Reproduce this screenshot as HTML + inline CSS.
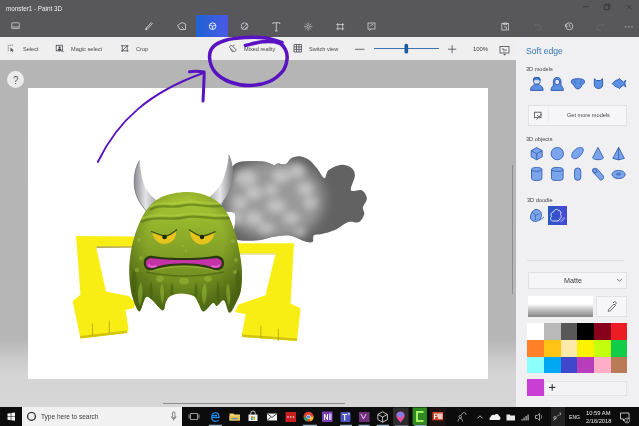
<!DOCTYPE html>
<html><head><meta charset="utf-8">
<style>
*{margin:0;padding:0;box-sizing:border-box}
html,body{width:639px;height:426px;overflow:hidden;background:#b5b6b5;font-family:"Liberation Sans",sans-serif}
.a{position:absolute}
#title{left:0;top:0;width:639px;height:37px;background:#58585c}
#tb{left:0;top:37px;width:516px;height:23px;background:#efeff0}
#area{left:0;top:60px;width:516px;height:347px;background:linear-gradient(#b4b5b4 0,#b5b6b5 279px,#c8c8c8 297px,#d4d4d4 314px,#d7d7d7 347px)}
#canvas{left:28px;top:88px;width:460px;height:291px;background:#fff}
#panel{left:516px;top:37px;width:123px;height:370px;background:#f0f0f2}
#task{left:0;top:407px;width:639px;height:19px;background:#0c0c0c}
.t{position:absolute;white-space:nowrap;line-height:1;-webkit-font-smoothing:antialiased;will-change:transform}
</style></head><body>
<div class="a" id="title">
<div class="t" style="left:6px;top:6.3px;font-size:6.3px;color:#f2f2f2">monster1 - Paint 3D</div>
<div class="a" style="left:196px;top:15px;width:32px;height:22px;background:linear-gradient(90deg,#1f63d3,#3a5ee0 60%,#4a58e6)"></div>
<svg class="a" style="left:0;top:0" width="639" height="37" viewBox="0 0 639 37" fill="none" stroke="#cfcfd2" stroke-width="0.8">
<rect x="11.8" y="22.8" width="7.5" height="5.8" rx="0.5"/><path d="M11.8 27h7.5"/>
<path d="M145.8 29.8l1.5-.5 5-5.8-1-1-5 5.6zM145.8 29.8l.8-2" stroke-width="0.9"/>
<path d="M177.5 25.5l4.5-3 3.5 1.5v5.5h-5.5zM181.5 26.5l2 2" stroke-width="0.9"/>
<g stroke="#f4f6ff" stroke-width="0.9"><circle cx="212.6" cy="26.2" r="3.3"/><path d="M210.2 25l2.4 1.3 2.4-1.3M212.6 26.3v3"/></g>
<circle cx="244.6" cy="26.2" r="3.4"/><path d="M242 28.8l5-5M244.5 29.5l2.5-2.5"/>
<path d="M272.8 22.8h7M276.3 22.8v8.2M275 31h2.6M272.8 22.8v1.3M279.8 22.8v1.3" stroke-width="0.9"/>
<g stroke-width="0.7"><circle cx="308.2" cy="26.6" r="1.4"/><path d="M308.2 22.5v2M308.2 28.7v2M304.1 26.6h2M310.3 26.6h2M305.3 23.7l1.4 1.4M309.7 28.1l1.4 1.4M305.3 29.5l1.4-1.4M309.7 25.1l1.4-1.4"/></g>
<path d="M337.8 23v7.2M342.6 23v7.2M336.3 24.5h7.8M336.3 28.8h7.8" stroke-width="0.8"/>
<rect x="368" y="23" width="7" height="6" /><path d="M370 26.5l1.8-1.8h1.5M369 31l1.8-1.8" stroke-width="0.8"/>
<rect x="501.8" y="23.5" width="6.8" height="6.5"/><path d="M503.5 23h3.4v1.6h-3.4zM504 27h2.4v2.8"/>
<path d="M534.5 25h4.3a2.6 2.6 0 010 5.2h-1.8M536.3 23.2l-1.8 1.8 1.8 1.8" stroke="#6a6a6e"/>
<circle cx="569.3" cy="26.3" r="3.5"/><path d="M569.3 24.2v2.2l1.5 1M565.5 24v2.3h2.2"/>
<path d="M603.5 25h-4.3a2.6 2.6 0 000 5.2h1.8M601.7 23.2l1.8 1.8-1.8 1.8" stroke="#6a6a6e"/>
<g fill="#d4d4d6" stroke="none"><circle cx="625.8" cy="26.8" r="0.65"/><circle cx="628.9" cy="26.8" r="0.65"/><circle cx="632" cy="26.8" r="0.65"/></g>
<g stroke="#3c3c40" stroke-width="1"><path d="M583 6.8h5.5"/><rect x="604.3" y="5.2" width="4.4" height="4.4"/><path d="M605.5 5.2v-1.2h4.4v4.4h-1.2"/><path d="M627 4.8l4.4 4.4M631.4 4.8l-4.4 4.4"/></g>
</svg>
</div>
<div class="a" id="tb">
<div class="t" style="left:22.5px;top:10.2px;font-size:5.6px;color:#48484c">Select</div>
<div class="t" style="left:70.7px;top:10.2px;font-size:5.6px;color:#48484c">Magic select</div>
<div class="t" style="left:135.7px;top:10.2px;font-size:5.6px;color:#48484c">Crop</div>
<div class="t" style="left:243.8px;top:10.2px;font-size:5.6px;color:#48484c">Mixed reality</div>
<div class="t" style="left:309.4px;top:10.2px;font-size:5.6px;color:#48484c">Switch view</div>
<div class="t" style="left:472.8px;top:10px;font-size:5.9px;color:#3a3a3c">100%</div>
</div>
<svg class="a" style="left:0;top:37px" width="516" height="22" viewBox="0 37 516 22" fill="none" stroke="#4a4a50" stroke-width="0.8">
<!-- select -->
<path d="M8.3 45.2v1.2M8.3 47.4v1.2M8.3 49.6v1.2M9.5 45.2h1.2M11.7 45.2h1.2" stroke-width="0.8"/><path d="M10.5 47.5v4.2l1.1-1 .8 1.6.7-.3-.8-1.6h1.5z" fill="#4a4a50" stroke="none"/>
<!-- magic select -->
<rect x="56.2" y="45.3" width="6.2" height="5.6" stroke-width="0.8"/><path d="M57.8 50.5c0-1.5.8-2.3 1.8-2.3s1.8.8 1.8 2.3z" fill="#3a3a40" stroke="none"/><circle cx="59.6" cy="47.2" r="1" fill="#3a3a40" stroke="none"/><path d="M62.5 50.8l1.2 1.2" stroke-width="0.8"/>
<!-- crop -->
<path d="M121 45.8h7.5M121 50.8h7.5M122.3 45v6.8M127.2 45v6.8M122.3 50.8l4.9-5" stroke-width="0.8"/>
<!-- mixed reality -->
<path d="M229.3 47l2-2 5 5-2 2zM230.3 49.5l2.5 2.3M233 46l1.5-1" stroke-width="0.8"/>
<!-- switch view grid -->
<path d="M294 44.5h7.5v7.5h-7.5zM294 46.9h7.5M294 49.4h7.5M296.5 44.5v7.5M299 44.5v7.5"/>
<!-- minus -->
<path d="M355 49.3h9.5" stroke-width="0.8"/>
<!-- slider -->
<path d="M374 48.5h65" stroke="#3d73b0" stroke-width="1"/>
<rect x="404.5" y="43.8" width="3.6" height="9.8" rx="1.6" fill="#1e5a9e" stroke="none"/>
<!-- plus -->
<path d="M448 49.2h8.2M452.1 45.2v8"/>
<!-- view icon -->
<rect x="500" y="46.5" width="9" height="6.5" /><path d="M502 49h2v2.5M505 50h2" /><path d="M503.8 54.3h1.6l-.8.9z" fill="#4a4a50"/>
</svg>
<div class="a" id="area"></div>
<div class="a" style="left:511.5px;top:165px;width:1.3px;height:129px;background:#8e8e8e"></div>
<div class="a" style="left:163px;top:402.5px;width:182px;height:1.3px;background:#8e8e8e"></div>
<div class="a" style="left:7px;top:71.2px;width:17px;height:17px;border-radius:50%;background:#ebebeb"></div>
<div class="t" style="left:12.8px;top:76.2px;font-size:10px;color:#505050;transform:scaleX(0.9)">?</div>
<div class="a" id="canvas"></div>
<svg class="a" style="left:0;top:0" width="639" height="426" viewBox="0 0 639 426">
<defs>
<radialGradient id="gBody" cx="0.42" cy="0.35" r="0.7">
<stop offset="0" stop-color="#9ab830"/><stop offset="0.55" stop-color="#7c9a22"/><stop offset="1" stop-color="#56701a"/>
</radialGradient>
<linearGradient id="gBodyV" x1="0" y1="0" x2="0" y2="1">
<stop offset="0" stop-color="#acca34"/><stop offset="0.3" stop-color="#92b22c"/><stop offset="0.6" stop-color="#7a9824"/><stop offset="1" stop-color="#60801a"/>
</linearGradient>
<radialGradient id="gBodyEdge" cx="0.5" cy="0.42" r="0.62">
<stop offset="0.55" stop-color="#3e5410" stop-opacity="0"/><stop offset="1" stop-color="#3e5410" stop-opacity="0.7"/>
</radialGradient>
<linearGradient id="gHornL" x1="0" y1="0" x2="1" y2="0">
<stop offset="0" stop-color="#8a8a90"/><stop offset="0.45" stop-color="#e4e4e8"/><stop offset="1" stop-color="#9a9aa0"/>
</linearGradient>
<linearGradient id="gHornR" x1="0" y1="0" x2="1" y2="0">
<stop offset="0" stop-color="#a0a0a6"/><stop offset="0.5" stop-color="#e8e8ec"/><stop offset="1" stop-color="#808086"/>
</linearGradient>
<radialGradient id="gCloud" cx="0.35" cy="0.45" r="0.65">
<stop offset="0" stop-color="#a8a8a8"/><stop offset="0.6" stop-color="#8c8c8c"/><stop offset="1" stop-color="#6a6a6a"/>
</radialGradient>
<filter id="blur1" x="-20%" y="-20%" width="140%" height="140%"><feGaussianBlur stdDeviation="0.5"/></filter>
<filter id="blur6" x="-50%" y="-50%" width="200%" height="200%"><feGaussianBlur stdDeviation="6"/></filter>
<filter id="blur3" x="-50%" y="-50%" width="200%" height="200%"><feGaussianBlur stdDeviation="3.5"/></filter>
</defs>
<!-- cloud -->
<clipPath id="cClip"><path d="M232.6 166.3 C234.6 164.1 236.8 162.3 241.9 161.5 C247.0 160.7 257.9 160.9 263.2 161.5 C268.5 162.1 271.4 164.6 273.8 164.9 C276.3 165.3 275.8 163.8 277.8 163.6 C279.8 163.5 283.6 165.0 285.8 164.1 C288.0 163.3 288.9 159.6 291.1 158.3 C293.3 157.0 296.2 155.9 299.1 156.2 C302.0 156.4 305.5 157.7 308.4 159.6 C311.3 161.5 313.7 164.5 316.4 167.6 C319.0 170.7 322.4 177.8 324.4 178.2 C326.4 178.7 325.7 172.5 328.4 170.3 C331.0 168.0 336.6 165.4 340.3 164.9 C344.1 164.5 348.5 165.8 351.0 167.6 C353.4 169.4 354.9 171.8 354.9 175.6 C354.9 179.4 349.8 187.8 351.0 190.2 C352.1 192.7 358.9 188.9 361.6 190.2 C364.3 191.5 366.7 195.3 366.9 198.2 C367.1 201.1 363.4 204.8 362.9 207.5 C362.5 210.2 364.9 211.7 364.3 214.1 C363.6 216.6 361.6 220.8 358.9 222.1 C356.3 223.5 352.3 220.8 348.3 222.1 C344.3 223.5 339.4 228.1 335.0 230.1 C330.6 232.1 325.2 233.2 321.7 234.1 C318.2 235.0 315.3 234.1 313.7 235.4 C312.2 236.8 314.2 241.2 312.4 242.1 C310.6 243.0 306.9 241.9 303.1 240.7 C299.3 239.6 294.7 236.1 289.8 235.4 C284.9 234.8 278.3 236.1 273.8 236.8 C269.4 237.4 267.2 238.8 263.2 239.4 C259.2 240.1 254.3 240.7 249.9 240.7 C245.5 240.7 239.3 240.7 236.6 239.4 C233.9 238.1 234.2 237.0 233.9 232.8 C233.7 228.6 236.6 217.7 235.3 214.1 C233.9 210.6 228.4 212.6 226.0 211.5 C223.5 210.4 220.4 210.4 220.6 207.5 C220.9 204.6 225.5 198.0 227.3 194.2 C229.1 190.4 230.8 188.2 231.3 184.9 C231.7 181.6 229.7 177.4 229.9 174.3 C230.2 171.2 230.6 168.4 232.6 166.3Z"/></clipPath>
<path d="M232.6 166.3 C234.6 164.1 236.8 162.3 241.9 161.5 C247.0 160.7 257.9 160.9 263.2 161.5 C268.5 162.1 271.4 164.6 273.8 164.9 C276.3 165.3 275.8 163.8 277.8 163.6 C279.8 163.5 283.6 165.0 285.8 164.1 C288.0 163.3 288.9 159.6 291.1 158.3 C293.3 157.0 296.2 155.9 299.1 156.2 C302.0 156.4 305.5 157.7 308.4 159.6 C311.3 161.5 313.7 164.5 316.4 167.6 C319.0 170.7 322.4 177.8 324.4 178.2 C326.4 178.7 325.7 172.5 328.4 170.3 C331.0 168.0 336.6 165.4 340.3 164.9 C344.1 164.5 348.5 165.8 351.0 167.6 C353.4 169.4 354.9 171.8 354.9 175.6 C354.9 179.4 349.8 187.8 351.0 190.2 C352.1 192.7 358.9 188.9 361.6 190.2 C364.3 191.5 366.7 195.3 366.9 198.2 C367.1 201.1 363.4 204.8 362.9 207.5 C362.5 210.2 364.9 211.7 364.3 214.1 C363.6 216.6 361.6 220.8 358.9 222.1 C356.3 223.5 352.3 220.8 348.3 222.1 C344.3 223.5 339.4 228.1 335.0 230.1 C330.6 232.1 325.2 233.2 321.7 234.1 C318.2 235.0 315.3 234.1 313.7 235.4 C312.2 236.8 314.2 241.2 312.4 242.1 C310.6 243.0 306.9 241.9 303.1 240.7 C299.3 239.6 294.7 236.1 289.8 235.4 C284.9 234.8 278.3 236.1 273.8 236.8 C269.4 237.4 267.2 238.8 263.2 239.4 C259.2 240.1 254.3 240.7 249.9 240.7 C245.5 240.7 239.3 240.7 236.6 239.4 C233.9 238.1 234.2 237.0 233.9 232.8 C233.7 228.6 236.6 217.7 235.3 214.1 C233.9 210.6 228.4 212.6 226.0 211.5 C223.5 210.4 220.4 210.4 220.6 207.5 C220.9 204.6 225.5 198.0 227.3 194.2 C229.1 190.4 230.8 188.2 231.3 184.9 C231.7 181.6 229.7 177.4 229.9 174.3 C230.2 171.2 230.6 168.4 232.6 166.3Z" fill="#626262"/>
<g clip-path="url(#cClip)">
<ellipse cx="274" cy="200" rx="50" ry="40" fill="#9a9a9a" filter="url(#blur6)"/>
<g fill="#c4c4c4" filter="url(#blur3)" opacity="0.95"><ellipse cx="246" cy="178" rx="11" ry="8"/><ellipse cx="254" cy="193" rx="9" ry="7"/><ellipse cx="240" cy="203" rx="7" ry="7"/><ellipse cx="281" cy="176" rx="9" ry="7"/><ellipse cx="297" cy="171" rx="8" ry="7"/><ellipse cx="305" cy="189" rx="8" ry="7"/><ellipse cx="276" cy="206" rx="10" ry="7"/><ellipse cx="254" cy="218" rx="9" ry="7"/><ellipse cx="291" cy="218" rx="8" ry="6"/><ellipse cx="310" cy="203" rx="7" ry="6"/><ellipse cx="271" cy="190" rx="7" ry="6"/><ellipse cx="266" cy="228" rx="8" ry="5"/><ellipse cx="236" cy="218" rx="6" ry="6"/><ellipse cx="300" cy="232" rx="6" ry="4"/></g>
</g>
<!-- horns -->
<path d="M139.5 160.5 C135 168 133.5 178 134.5 187 C135.5 196 140 204 146.5 211 L159.5 202.5 C153 198 148 193 145 187 C142 180 140.5 170 139.5 160.5Z" fill="url(#gHornL)"/>
<path d="M139.5 160.5 C135 168 133.5 178 134.5 187 C135.5 196 140 204 146.5 211" fill="none" stroke="#7a7a82" stroke-width="0.9"/>
<path d="M228.7 155 C232.5 163 233.5 173 232 182 C230 192 225 200 218.5 206.5 L207.5 198.5 C214 194 219 188 222.5 181 C226 173 228 164 228.7 155Z" fill="url(#gHornR)"/>
<path d="M228.7 155 C232.5 163 233.5 173 232 182 C230 192 225 200 218.5 206.5" fill="none" stroke="#86868c" stroke-width="0.9"/>
<!-- left arm -->
<path d="M76 236 L134 236.5 L134 246.5 L96 246.5 L106 291.5 L129 296 L135 303 L134 308 L125.5 310 L128.5 329 L127 333 L80.5 338.5 L72.6 301 L80.5 294.5Z" fill="#f9ee14"/>
<path d="M127 333 L80.5 338.5 L80 336 L127 330.5Z" fill="#d2c40c"/>
<path d="M92.5 323.5v12.5M109.3 320.5v12.5" stroke="#b4a808" stroke-width="0.9"/>
<path d="M96.5 247.2L134 247" stroke="#9a8c10" stroke-width="1.2"/>
<!-- right arm -->
<path d="M236 243.3 L294 243.3 L290.6 303.7 L300.6 308.2 L297 341 L242 337 L241.8 335 L245.6 314.3 L235 312 L238.7 304.4 L265.5 295.3 L275.7 253.2 L236 253.2Z" fill="#f9ee14"/>
<path d="M297 341 L242 337 L242 334.5 L297 338.5Z" fill="#d2c40c"/>
<path d="M260.9 325.8v13M278.4 328.9v12" stroke="#b4a808" stroke-width="0.9"/>
<path d="M237 254L275.5 254" stroke="#c0b010" stroke-width="1" opacity="0.7"/>
<!-- body -->
<clipPath id="bClip"><path d="M186.5 192.0 C194.8 191.9 203.5 193.9 210.0 197.0 C216.5 200.1 221.4 204.8 225.5 210.5 C229.6 216.2 232.2 224.1 234.5 231.0 C236.8 237.9 238.2 245.2 239.5 252.0 C240.8 258.8 241.8 265.7 242.0 272.0 C242.2 278.3 241.9 285.0 241.0 290.0 C240.1 295.0 238.4 298.2 236.5 302.0 C234.6 305.8 231.6 313.1 229.5 312.8 C227.4 312.6 226.1 301.6 224.0 300.5 C221.9 299.4 218.8 305.6 217.0 306.0 C215.2 306.4 215.2 302.1 213.0 303.0 C210.8 303.9 206.0 311.6 203.5 311.5 C201.0 311.4 199.7 305.1 198.0 302.5 C196.3 299.9 196.3 297.5 193.5 296.0 C190.7 294.5 185.1 293.5 181.3 293.5 C177.5 293.5 173.1 294.6 170.5 296.0 C167.9 297.4 167.3 299.6 166.0 302.0 C164.7 304.4 164.9 310.8 162.6 310.5 C160.3 310.2 154.8 302.1 152.0 300.0 C149.2 297.9 147.8 295.7 145.7 297.6 C143.6 299.5 141.6 311.3 139.5 311.5 C137.4 311.7 134.6 303.9 133.0 299.0 C131.4 294.1 130.4 288.2 129.8 282.0 C129.2 275.8 128.9 269.3 129.6 262.0 C130.3 254.7 131.5 246.2 134.0 238.0 C136.5 229.8 140.1 219.8 144.5 213.0 C148.9 206.2 153.5 201.0 160.5 197.5 C167.5 194.0 178.2 192.1 186.5 192.0Z"/></clipPath>
<path d="M186.5 192.0 C194.8 191.9 203.5 193.9 210.0 197.0 C216.5 200.1 221.4 204.8 225.5 210.5 C229.6 216.2 232.2 224.1 234.5 231.0 C236.8 237.9 238.2 245.2 239.5 252.0 C240.8 258.8 241.8 265.7 242.0 272.0 C242.2 278.3 241.9 285.0 241.0 290.0 C240.1 295.0 238.4 298.2 236.5 302.0 C234.6 305.8 231.6 313.1 229.5 312.8 C227.4 312.6 226.1 301.6 224.0 300.5 C221.9 299.4 218.8 305.6 217.0 306.0 C215.2 306.4 215.2 302.1 213.0 303.0 C210.8 303.9 206.0 311.6 203.5 311.5 C201.0 311.4 199.7 305.1 198.0 302.5 C196.3 299.9 196.3 297.5 193.5 296.0 C190.7 294.5 185.1 293.5 181.3 293.5 C177.5 293.5 173.1 294.6 170.5 296.0 C167.9 297.4 167.3 299.6 166.0 302.0 C164.7 304.4 164.9 310.8 162.6 310.5 C160.3 310.2 154.8 302.1 152.0 300.0 C149.2 297.9 147.8 295.7 145.7 297.6 C143.6 299.5 141.6 311.3 139.5 311.5 C137.4 311.7 134.6 303.9 133.0 299.0 C131.4 294.1 130.4 288.2 129.8 282.0 C129.2 275.8 128.9 269.3 129.6 262.0 C130.3 254.7 131.5 246.2 134.0 238.0 C136.5 229.8 140.1 219.8 144.5 213.0 C148.9 206.2 153.5 201.0 160.5 197.5 C167.5 194.0 178.2 192.1 186.5 192.0Z" fill="url(#gBodyV)"/>
<g clip-path="url(#bClip)">
<path d="M186.5 192.0 C194.8 191.9 203.5 193.9 210.0 197.0 C216.5 200.1 221.4 204.8 225.5 210.5 C229.6 216.2 232.2 224.1 234.5 231.0 C236.8 237.9 238.2 245.2 239.5 252.0 C240.8 258.8 241.8 265.7 242.0 272.0 C242.2 278.3 241.9 285.0 241.0 290.0 C240.1 295.0 238.4 298.2 236.5 302.0 C234.6 305.8 231.6 313.1 229.5 312.8 C227.4 312.6 226.1 301.6 224.0 300.5 C221.9 299.4 218.8 305.6 217.0 306.0 C215.2 306.4 215.2 302.1 213.0 303.0 C210.8 303.9 206.0 311.6 203.5 311.5 C201.0 311.4 199.7 305.1 198.0 302.5 C196.3 299.9 196.3 297.5 193.5 296.0 C190.7 294.5 185.1 293.5 181.3 293.5 C177.5 293.5 173.1 294.6 170.5 296.0 C167.9 297.4 167.3 299.6 166.0 302.0 C164.7 304.4 164.9 310.8 162.6 310.5 C160.3 310.2 154.8 302.1 152.0 300.0 C149.2 297.9 147.8 295.7 145.7 297.6 C143.6 299.5 141.6 311.3 139.5 311.5 C137.4 311.7 134.6 303.9 133.0 299.0 C131.4 294.1 130.4 288.2 129.8 282.0 C129.2 275.8 128.9 269.3 129.6 262.0 C130.3 254.7 131.5 246.2 134.0 238.0 C136.5 229.8 140.1 219.8 144.5 213.0 C148.9 206.2 153.5 201.0 160.5 197.5 C167.5 194.0 178.2 192.1 186.5 192.0Z" fill="url(#gBodyEdge)"/>
<g fill="none" stroke="#4e6812" stroke-width="2.4" opacity="0.55" filter="url(#blur1)">
<path d="M150 210 C160 203 170 209 183 205.5 C196 202 206 209 223 205.5"/>
<path d="M141 222 C156 215 169 221 184 217.5 C199 214 211 221 233 217.5"/>
</g>
<g fill="none" stroke="#b8d44a" stroke-width="1.7" opacity="0.5" filter="url(#blur1)">
<path d="M150 206.8 C160 199.8 170 205.8 183 202.3 C196 198.8 206 205.8 223 202.3"/>
<path d="M141 218.8 C156 211.8 169 217.8 184 214.3 C199 210.8 211 217.8 233 214.3"/>
</g>
<g fill="#44600c" opacity="0.6" filter="url(#blur1)">
<path d="M151 281 C153 288 153 296 151 301 C149 296 149 288 151 281Z"/><path d="M172 282 C174 288 174 294 172 297 C170 294 170 288 172 282Z"/><path d="M196 282 C198 288 198 295 196 299 C194 295 194 288 196 282Z"/><path d="M218 281 C220 288 220 297 218 303 C216 297 216 288 218 281Z"/>
<ellipse cx="134" cy="282" rx="2.5" ry="12"/><ellipse cx="238" cy="282" rx="2.5" ry="12"/>
<path d="M146 272 C160 275 175 276 184 276 C195 276 210 275 224 272" fill="none" stroke="#44600c" stroke-width="1.5"/>
</g>
<g fill="#9fbe38" opacity="0.5" filter="url(#blur1)">
<path d="M141 282 C144 290 142 300 140 306 C137 298 137 288 141 282Z"/><path d="M162 283 C165 290 164 298 162.5 304 C160 297 159 289 162 283Z"/><path d="M205 283 C208 290 207 299 204 305 C201 297 201 289 205 283Z"/><path d="M228 283 C231 290 231 300 229 306 C226 298 225 289 228 283Z"/>
<ellipse cx="160" cy="279" rx="4" ry="3"/><ellipse cx="184" cy="281" rx="5" ry="3.5"/><ellipse cx="208" cy="279" rx="4" ry="3"/>
<circle cx="139" cy="240" r="2"/><circle cx="141" cy="258" r="2"/><circle cx="233" cy="241" r="2"/><circle cx="236" cy="260" r="2"/><circle cx="183" cy="246" r="1.6"/><circle cx="186" cy="251" r="1.3"/><circle cx="137" cy="270" r="2.2"/><circle cx="235" cy="272" r="2"/>
</g>
</g>
<!-- eyes -->
<path d="M152 232 C158 234 162 236 165 236 C169 236 173 233 176 230 C177 236 174 243 165 244 C157 244 153 238 152 232Z" fill="#e6c41c"/>
<path d="M151 231.5 C158 234 162 236 165 236 C169 236 173 233 177 229.5" fill="none" stroke="#3a4a10" stroke-width="1.3"/>
<circle cx="164.6" cy="237" r="2.3" fill="#1e2608"/>
<path d="M190 230 C194 233 198 236 202 236 C206 236 210 234 214.6 232 C214 239 209 244.5 202 244.5 C195 244.5 190 238 190 230Z" fill="#e6c41c"/>
<path d="M189 229.5 C194 233 198 236 202 236 C206 236 210 234 215.5 231.5" fill="none" stroke="#3a4a10" stroke-width="1.3"/>
<circle cx="202" cy="237" r="2.3" fill="#1e2608"/>
<!-- mouth -->
<path d="M143.8 263 C143.5 256.5 149.5 254.5 156 256.5 C170 258.5 196 258.5 211 256.5 C218 254.5 224.2 256.5 224 263 C224 270.5 216.5 272 210 268.5 C196 264 172 264 157.5 268.5 C150.5 272 144 270.5 143.8 263Z" fill="#2a3810"/>
<path d="M146 263 C146 258.5 150.5 257.2 156 258.8 C170 260.5 196 260.5 211 258.8 C216.5 257.2 221.8 258.5 221.8 263 C221.8 268.5 216 269.5 210 266.5 C196 262.2 172 262.2 157.5 266.5 C151.5 269.5 146 268.5 146 263Z" fill="#c434a8"/>
<path d="M148.5 264.5 C149.5 267 153 267.3 156.5 265.8 M211.5 265.8 C215 267.3 218.5 267 219.5 264.5" fill="none" stroke="#ec6cd4" stroke-width="1.5"/>
<path d="M150 271.5 C160 268.5 172 266.5 184 266.5 C196 266.5 208 268.5 218 271.5" fill="none" stroke="#a4c040" stroke-width="1" opacity="0.6"/>
</svg>
<div class="a" id="panel"></div>
<div class="t" style="left:525.6px;top:46.5px;font-size:8.6px;color:#3475b5">Soft edge</div>
<div class="t" style="left:526px;top:66.5px;font-size:5.6px;color:#454548">3D models</div>
<div class="a" style="left:527.5px;top:104.5px;width:99.5px;height:21.5px;background:#f6f6f8;border:1px solid #e2e2e6"></div>
<div class="a" style="left:548px;top:107px;width:1px;height:16px;background:#ececf0"></div>
<div class="t" style="left:566.6px;top:113.3px;font-size:5.6px;color:#48484c">Get more models</div>
<div class="t" style="left:526px;top:136.5px;font-size:5.6px;color:#454548">3D objects</div>
<div class="t" style="left:527px;top:198px;font-size:5.6px;color:#454548">3D doodle</div>
<div class="a" style="left:548px;top:206px;width:18.5px;height:18.5px;background:linear-gradient(90deg,#2858c4,#4a48d8)"></div>
<div class="a" style="left:527px;top:260px;width:97px;height:1px;background:#dfdfe3"></div>
<div class="a" style="left:527.5px;top:271.5px;width:99.5px;height:17.5px;background:#f5f5f7;border:1px solid #e0e0e4"></div>
<div class="t" style="left:563.5px;top:277px;font-size:7.2px;color:#3a3a3c">Matte</div>
<div class="a" style="left:527.5px;top:296px;width:65.5px;height:20.5px;background:linear-gradient(#fff 0,#fff 38%,#d8d8d8 55%,#a8a8a8 80%,#888 100%)"></div>
<div class="a" style="left:596px;top:296px;width:31px;height:20.5px;background:#f6f6f8;border:1px solid #e2e2e6"></div>
<div class="a" style="left:527.3px;top:323.2px;width:100.2px;height:50.3px;display:grid;grid-template-columns:repeat(6,1fr);grid-template-rows:repeat(3,1fr)">
<div style="background:#fff"></div><div style="background:#b9b9b9"></div><div style="background:#585858"></div><div style="background:#000"></div><div style="background:#88001b"></div><div style="background:#ec1c24"></div>
<div style="background:#ff7f27"></div><div style="background:#ffc414"></div><div style="background:#fde9a8"></div><div style="background:#fff200"></div><div style="background:#c4ff0e"></div><div style="background:#10cc48"></div>
<div style="background:#8cfffb"></div><div style="background:#00a8f3"></div><div style="background:#3f48cc"></div><div style="background:#b83dba"></div><div style="background:#ffaec8"></div><div style="background:#b97a57"></div>
</div>
<div class="a" style="left:543.7px;top:380.5px;width:83.5px;height:15.5px;background:#f3f3f5;border:1px solid #e3e3e7"></div>
<div class="a" style="left:527.3px;top:379.3px;width:16.5px;height:16.7px;background:#c93fd3"></div>
<svg class="a" style="left:516px;top:37px" width="123" height="370" viewBox="516 37 123 370">
<g fill="#5b8fe2" stroke="#2a57ab" stroke-width="0.9" stroke-linejoin="round">
<!-- man -->
<path d="M530.5 90.4c0-3.6 2.6-6 6.3-6s6.3 2.4 6.3 6z"/><rect x="533.6" y="77.6" width="6.4" height="6.4" rx="2" fill="#dbe6f8"/><path d="M533.6 80.3c0-1.8 1.2-2.7 3.2-2.7s3.2.9 3.2 2.7" stroke-width="1.3"/>
<!-- woman -->
<path d="M551 90.4c0-3.6 2.6-6 6.2-6s6.2 2.4 6.2 6z"/><path d="M553.4 86.5v-5.3c0-2.4 1.6-3.8 3.8-3.8s3.8 1.4 3.8 3.8v5.3" fill="#5b8fe2"/><ellipse cx="557.2" cy="82" rx="2.5" ry="2.8" fill="#dbe6f8"/>
<!-- dog -->
<path d="M574.5 79c1.8-.5 4.5-.5 6.8 0 2 .2 3.4 1.2 3.2 3-.2 1.5-1.2 2.3-2.4 2.5-.6 2.3-1.8 4.4-4.2 4.4s-3.6-2.1-4.2-4.4c-1.2-.2-2.2-1-2.4-2.5-.2-1.8 1.2-2.8 3.2-3z"/><path d="M574.5 80.5c.3 1.5.8 2.8 1.8 3.5M581.3 80.5c-.3 1.5-.8 2.8-1.8 3.5" fill="none" stroke-width="0.7"/>
<!-- cat -->
<path d="M594.3 78.7l2.2 1.8h3.8l2.2-1.8.2 6c0 2.3-1.8 3.8-4.2 3.8s-4.2-1.5-4.2-3.8z"/>
<!-- fish -->
<path d="M612.2 83.6c2-2.4 4-3.6 5.8-3.8l1.5-1.3 1.2 1.6c1.2.4 2 1.2 2.8 2.2l2.2-2.2-.8 3.5.8 3.5-2.2-2.2c-.8 1-1.6 1.8-2.8 2.2l-1.2 1.6-1.5-1.3c-1.8-.2-3.8-1.4-5.8-3.8z"/>
</g>
<!-- get more icon -->
<g fill="none" stroke="#4a4a50" stroke-width="0.8"><rect x="534.5" y="112.2" width="6.5" height="5.5"/><path d="M537 115l2 2 2.5-3M536.5 119.5l1.5-1.5"/></g>
<g fill="#7aa5ec" stroke="#3560b0" stroke-width="0.9" stroke-linejoin="round">
<!-- cube -->
<path d="M536.7 147.6l5.5 3v6.2l-5.5 3-5.5-3v-6.2z"/><path d="M531.2 150.6l5.5 3 5.5-3M536.7 153.6v6.2" fill="none"/>
<!-- sphere -->
<circle cx="557.3" cy="153.6" r="6.2"/>
<!-- ellipsoid -->
<path d="M572 157c-1-3 1.5-6.8 5-8.6 3.5-1.8 6.2-1 6.3 1 .2 2.5-2 6-5 8-3 2-5.8 1.5-6.3-.4z"/>
<!-- cone -->
<path d="M598 147.4l5.5 10.5c-1 1.2-3 1.8-5.5 1.8s-4.5-.6-5.5-1.8z"/>
<!-- pyramid -->
<path d="M618.6 147.4l5.8 11-5.8 1.5-5.8-1.5z"/><path d="M618.6 147.4v12.5" fill="none"/>
<!-- cylinder -->
<path d="M531.5 169.5c0-1.5 2.4-2 5.2-2s5.2.5 5.2 2v9c0 1.5-2.4 2-5.2 2s-5.2-.5-5.2-2z"/><path d="M531.5 169.5c0 1.3 2.4 1.8 5.2 1.8s5.2-.5 5.2-1.8" fill="none"/>
<!-- tube -->
<path d="M551.5 169.5c0-1.5 2.4-2 5.8-2s5.8.5 5.8 2v9c0 1.5-2.4 2-5.8 2s-5.8-.5-5.8-2z"/><path d="M551.5 169.5c0 1.3 2.4 1.8 5.8 1.8s5.8-.5 5.8-1.8" fill="none"/>
<!-- capsule -->
<rect x="574.5" y="168" width="6.3" height="12.3" rx="3.1"/>
<!-- curved tube -->
<path d="M593 169.5c1.5-1.5 3.5-1.5 4.8 0l5.5 6.5c.8 2.5-.5 4-2.8 4.2l-6.5-7c-1.5-1.2-2.2-2.4-1-3.7z"/><ellipse cx="594.7" cy="170.7" rx="1.6" ry="2.4" transform="rotate(-40 594.7 170.7)"/>
<!-- torus -->
<ellipse cx="618.6" cy="174.5" rx="6.6" ry="4.1"/><ellipse cx="618.6" cy="174.2" rx="2.2" ry="0.9" fill="none"/>
<!-- doodle sharp -->
<path d="M530.5 216l1.5-4 3-2.5 3.5.3 2.5 2.5.5 3.5-1.5 3.5-3.5 2.2-3.5-.5-2.5-2z"/><path d="M532.5 212.5l3 2.5 3.5-1M535.5 215v5" fill="none" stroke-width="0.7"/><path d="M539.5 220.5l4.5-3.5" fill="none" stroke-width="0.9"/>
</g>
<!-- doodle soft active icon -->
<path d="M553 221c-2.3 0-3.3-2.8-1.5-4.2-1.2-2.2-.2-4.8 2.2-5 .4-2.4 3.4-3.2 5-1.2 2-.2 3 2.2 1.8 3.8 1 1.2 1 3.2-.5 4.2l-1.8 2.4z" fill="none" stroke="#e8f0ff" stroke-width="0.9"/>
<path d="M559.8 221.6l4.6-4.6M560.8 222.4l4.4-4.4" fill="none" stroke="#d8e4ff" stroke-width="0.6"/>
<!-- chevron -->
<path d="M617 279l2.4 2.2 2.4-2.2" fill="none" stroke="#555" stroke-width="0.8"/>
<!-- eyedropper -->
<path d="M608.5 309.5l5.5-5.5 1.5 1.5-5.5 5.5-1.8.3zM613 303l1-1a1.2 1.2 0 011.8 1.8l-1 1" fill="none" stroke="#4a4a58" stroke-width="0.8"/>
<!-- plus -->
<path d="M549 387.4h6.4M552.2 384.2v6.4" stroke="#222" stroke-width="1"/>
</svg>
<div class="a" id="task">
<div class="a" style="left:22px;top:0;width:160px;height:19px;background:#f1f1f1"></div>
<div class="t" style="left:41.3px;top:7px;font-size:6.5px;color:#3a3a3a">Type here to search</div>
<div class="t" style="left:568.5px;top:8.2px;font-size:5.1px;color:#e8e8e8">ENG</div>
<div class="t" style="left:586.3px;top:3.6px;font-size:5.8px;color:#e8e8e8">10:59 AM</div>
<div class="t" style="left:585.5px;top:11.6px;font-size:5.7px;color:#e8e8e8">2/16/2018</div>
<div class="a" style="left:550.5px;top:0;width:14px;height:19px;background:#232323"></div>
</div>
<svg class="a" style="left:0;top:407px" width="639" height="19" viewBox="0 407 639 19">
<!-- windows logo -->
<g fill="#f4f4f4"><path d="M7.5 413.6l3.2-.4v3.2h-3.2zM11.3 413.1l3.7-.5v3.8h-3.7zM7.5 417h3.2v3.2l-3.2-.4zM11.3 417h3.7v3.8l-3.7-.5z"/></g>
<!-- cortana -->
<circle cx="31.5" cy="416.4" r="3.9" fill="none" stroke="#1a1a1a" stroke-width="1.2"/>
<!-- mic -->
<path d="M172.5 413v3.5a1.2 1.2 0 002.4 0V413a1.2 1.2 0 00-2.4 0zM171.5 416.5a2.2 2.2 0 004.4 0M173.7 418.7v1.8" fill="none" stroke="#555" stroke-width="0.7"/>
<!-- task view -->
<path d="M190.5 413.5h7v6h-7zM189 414.5v4M199 414.5v4" fill="none" stroke="#d8d8d8" stroke-width="0.7"/>
<!-- edge -->
<path d="M212 417.5h7c0-3-1.6-4.8-3.6-4.8s-3.7 2-3.7 4.3c0 2.8 1.8 4.3 3.8 4.3 1.3 0 2.4-.4 3.2-1M212.6 415.5h4.5" fill="none" stroke="#1f86e0" stroke-width="1.3"/>
<g stroke="#9aaec4" stroke-width="1.2"><path d="M209 425.4h13M302.7 425.4h14.3M340 425.4h12M358.5 425.4h11.2M376.8 425.4h12.2M395 425.4h13.3M414.4 425.4h12.2M432.7 425.4h12.3"/></g>
<!-- explorer -->
<path d="M229.5 413.5h4l1 1h5.5v6h-10.5z" fill="#f0d070"/><path d="M229.5 416h10.5v4.5h-10.5z" fill="#e8c050"/><path d="M231.5 418h6v1.2h-6z" fill="#4a90d0"/>
<!-- store -->
<path d="M248.5 414.5h9v6.5h-9z" fill="#f4f4f4"/><path d="M250.8 414.5v-1.3a2.2 2.2 0 014.4 0v1.3" fill="none" stroke="#f4f4f4" stroke-width="0.8"/><g fill="#e85020"><rect x="251" y="416.5" width="1.8" height="1.6"/></g><g fill="#70b020"><rect x="253.2" y="416.5" width="1.8" height="1.6"/></g><g fill="#20a0e0"><rect x="251" y="418.4" width="1.8" height="1.6"/></g><g fill="#f0b800"><rect x="253.2" y="418.4" width="1.8" height="1.6"/></g>
<!-- mail -->
<path d="M267 413.5h10v7h-10z" fill="#f4f4f4"/><path d="M267 413.5l5 4 5-4M267 420.5l3.8-3.5" fill="none" stroke="#222" stroke-width="0.8"/>
<!-- red app -->
<rect x="285.5" y="412" width="10.5" height="10" fill="#c81e1e"/><g fill="#fff"><circle cx="288" cy="417" r="0.8"/><circle cx="290.7" cy="417" r="0.8"/><circle cx="293.4" cy="417" r="0.8"/></g>
<!-- chrome -->
<circle cx="308.5" cy="416.8" r="5" fill="#dd4434"/><path d="M308.5 416.8L303.6 417.5a5 5 0 003.4 4.1z" fill="#1ea362"/><path d="M308.5 416.8l2.2 4.5a5 5 0 002.8-4.8z" fill="#f4c020"/><circle cx="308.5" cy="416.8" r="2.1" fill="#fff"/><circle cx="308.5" cy="416.8" r="1.6" fill="#4a88e8"/>
<!-- onenote -->
<rect x="322" y="411.5" width="10.5" height="10.5" fill="#7a3db8"/><path d="M324.5 420v-6l3 6v-6" fill="none" stroke="#fff" stroke-width="1"/><rect x="329" y="413.5" width="2.5" height="6.5" fill="#d0b8e8"/>
<!-- teams -->
<rect x="340.5" y="412" width="10" height="10" rx="1" fill="#4b53bc"/><path d="M342.5 414.5h4.5M344.7 414.5v6" stroke="#fff" stroke-width="1.1"/><circle cx="348.8" cy="414" r="1.2" fill="#a6acf0"/>
<!-- vs purple -->
<rect x="359" y="412" width="10.5" height="10" fill="#70307c"/><path d="M361 414l2.5 5 2.5-5" fill="none" stroke="#e6c8ee" stroke-width="1"/>
<!-- 3d viewer cube -->
<path d="M382.6 411.8l4.8 2.6v5.2l-4.8 2.6-4.8-2.6v-5.2z M377.8 414.4l4.8 2.6 4.8-2.6M382.6 417v5.2" fill="none" stroke="#e8e8e8" stroke-width="0.8"/>
<!-- maps pin --><rect x="393" y="407.5" width="15.5" height="18" fill="#2c2c2c"/>
<path d="M400.5 422.5c-2.5-3-4.2-4.8-4.2-6.8a4.2 4.2 0 018.4 0c0 2-1.7 3.8-4.2 6.8z" fill="#e8509a"/><path d="M396.6 415a4.2 4.2 0 017.8-.5l-3.9 3.6z" fill="#7a80f0"/>
<!-- camtasia -->
<rect x="412.6" y="407.5" width="14.3" height="17.3" fill="#2f8a22"/><path d="M423.5 412h-6.5v9h6.5" fill="none" stroke="#a8f060" stroke-width="2"/>
<!-- powerpoint -->
<rect x="429.4" y="407.5" width="16.3" height="18.5" fill="#1c1212"/><rect x="432.5" y="412" width="10.6" height="8.3" fill="#d04a30"/><rect x="438" y="413.5" width="4.5" height="5.5" fill="#f0c8c0"/><path d="M434.5 419v-5h2a1.3 1.3 0 010 2.6h-2" fill="none" stroke="#fff" stroke-width="0.9"/>
<!-- people -->
<path d="M458 421.5c0-2 1-3 2.3-3s2.3 1 2.3 3M460.3 418a1.3 1.3 0 100-2.6 1.3 1.3 0 000 2.6zM461.5 415c.5-1.5 1.3-2.5 2.5-2.5s2 1 2 2.3" fill="none" stroke="#d8d8d8" stroke-width="0.7"/>
<!-- chevron -->
<path d="M477.5 418.3l2.5-2.5 2.5 2.5" fill="none" stroke="#d8d8d8" stroke-width="0.8"/>
<!-- onedrive -->
<path d="M490.5 420c-1.5 0-1.5-2.5 0-2.8.3-2 2.5-3 4-2 1-1.8 4-1.5 4.5.8 1.8 0 2 4 0 4z" fill="#f0f0f0"/>
<!-- folder -->
<path d="M506.5 414.5h3l1 1h4.5v5h-8.5z" fill="#e8e8e8"/>
<!-- wifi/network -->
<path d="M521.5 420.5h1.2v-1.5h-1.2zM523.5 420.5h1.2v-3h-1.2zM525.5 420.5h1.2v-4.5h-1.2zM527.5 420.5h1.2v-6h-1.2z" fill="#b8b8b8"/>
<!-- volume -->
<path d="M535.5 415.5h1.8l2.2-2v7l-2.2-2h-1.8z" fill="none" stroke="#d8d8d8" stroke-width="0.7"/><path d="M541 415c.8.8.8 2.8 0 3.8" fill="none" stroke="#d8d8d8" stroke-width="0.6"/>
<!-- pen icon -->
<path d="M553.5 420.5l2-2M555 419a1.2 1.2 0 100-2.4 1.2 1.2 0 000 2.4zM557 416.5l2-2M559.5 415a1.2 1.2 0 100-2.4" fill="none" stroke="#d8d8d8" stroke-width="0.7"/>
<!-- notification -->
<path d="M620.5 413h8.5v6h-3.5l-2 2v-2h-3z" fill="none" stroke="#e8e8e8" stroke-width="0.8"/><circle cx="627" cy="420.5" r="2.5" fill="#101010" stroke="#e8e8e8" stroke-width="0.6"/><path d="M626.2 419.8c.3-.8 1.6-.8 1.6 0 0 .6-1.6 1.2-1.6 1.7h1.6" fill="none" stroke="#e8e8e8" stroke-width="0.45"/>
</svg>
<svg class="a" style="left:0;top:0" width="639" height="426" viewBox="0 0 639 426" fill="none" stroke="#5812c2" stroke-linecap="round" stroke-linejoin="round">
<path d="M245.4 45.5 C248.3 44.9 257.0 42.2 262.6 41.8 C268.2 41.4 275.2 41.6 279.0 43.0 C282.8 44.4 284.3 47.2 285.6 50.0 C286.9 52.8 287.5 56.0 287.0 59.5 C286.5 63.0 285.7 67.3 282.8 71.0 C279.9 74.7 275.0 79.1 269.5 81.5 C264.0 83.9 256.6 85.4 250.0 85.5 C243.4 85.6 235.8 84.2 230.0 82.0 C224.2 79.8 218.4 76.0 215.0 72.0 C211.6 68.0 209.9 62.2 209.6 58.0 C209.3 53.8 210.4 49.9 213.0 47.0 C215.6 44.1 219.7 42.1 225.0 40.5 C230.3 38.9 238.2 38.0 245.0 37.6 C251.8 37.2 259.8 37.2 266.0 38.0 C272.2 38.8 279.3 41.8 282.0 42.5" stroke-width="3.5"/>
<path d="M97.8 162 C118 120 150 92 203.5 73" stroke-width="1.9"/>
<path d="M189.5 71.8 C194 70.8 199 71 204.2 72 C204 82 203.5 92 203 101" stroke-width="3"/>
</svg>
</body></html>
